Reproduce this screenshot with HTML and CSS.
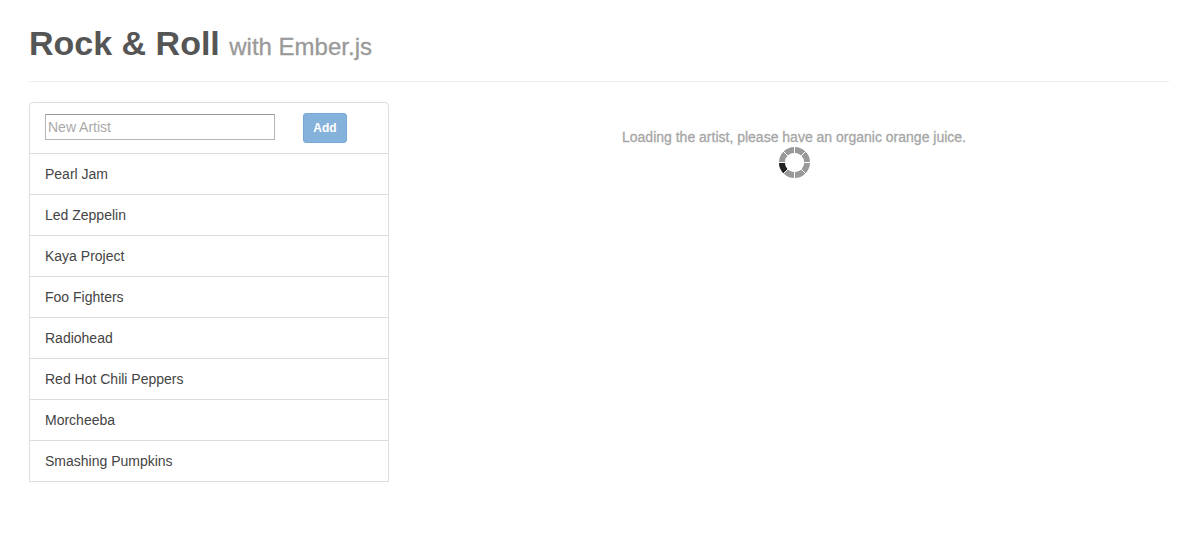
FILE: index.html
```html
<!DOCTYPE html>
<html lang="en">
<head>
<meta charset="utf-8">
<title>Rock &amp; Roll with Ember.js</title>
<link rel="stylesheet" href="styles.css">
</head>
<body>
<div class="container">
  <header class="page-header">
    <h1 class="title">Rock &amp; Roll <small class="subtitle">with Ember.js</small></h1>
  </header>
  <div class="row">
    <div class="artists">
      <form class="new-artist">
        <input class="artist-name" type="text" placeholder="New Artist" aria-label="New Artist">
        <button class="add" type="button">Add</button>
      </form>
      <a class="artist" href="#">Pearl Jam</a>
      <a class="artist" href="#">Led Zeppelin</a>
      <a class="artist" href="#">Kaya Project</a>
      <a class="artist" href="#">Foo Fighters</a>
      <a class="artist" href="#">Radiohead</a>
      <a class="artist" href="#">Red Hot Chili Peppers</a>
      <a class="artist" href="#">Morcheeba</a>
      <a class="artist" href="#">Smashing Pumpkins</a>
    </div>
    <main class="loading">
      <p class="message">Loading the artist, please have an organic orange juice.</p>
      <svg class="spinner" viewBox="0 0 31 31" width="31" height="31" aria-hidden="true">
        <circle cx="15.5" cy="15.5" r="12.5" fill="none" stroke="#999" stroke-width="6"/>
        <path d="M0 15.5A15.5 15.5 0 0 0 4.54 26.46L8.78 22.22A9.5 9.5 0 0 1 6 15.5Z" fill="#222"/>
        <path d="M15.5 0V31M0 15.5H31M4 4L27 27M27 4L4 27" fill="none" stroke="#fff"/>
        <circle cx="15.5" cy="15.5" r="9.5" fill="#fff"/>
      </svg>
    </main>
  </div>
</div>
</body>
</html>
```
FILE: styles.css
```css
* {
  box-sizing: border-box;
}

body {
  margin: 0;
  background: #fff;
  color: #333;
  font: 14px/20px "Helvetica Neue", Helvetica, "Liberation Sans", Arial, sans-serif;
}

.container {
  max-width: 1202px;
  padding: 0 33px 0 29px;
}

.page-header {
  padding: 24px 0 18px;
  margin-bottom: 20px;
  border-bottom: 1px solid #eee;
}

.title {
  margin: 0;
  color: #555;
  font-size: 34px;
  font-weight: bold;
  line-height: 39px;
}

.subtitle {
  color: #999;
  font-size: 24px;
  font-weight: normal;
  line-height: 1;
  -webkit-text-stroke: 0.3px #999;
}

.row {
  display: grid;
  grid-template-columns: minmax(0, 360fr) minmax(0, 750fr);
  gap: 30px;
  align-items: start;
}

.artists {
  border: 1px solid #ddd;
  border-radius: 4px 4px 0 0;
}

.new-artist {
  display: flex;
  align-items: flex-start;
  gap: 28px;
  padding: 10px 15px;
}

.artist-name {
  width: 230px;
  min-width: 0;
  height: 26px;
  margin-top: 1px;
  padding: 0 2px 1px;
  border: 1px solid #b4b4b4;
  border-top-color: #999;
  border-radius: 0;
  background: #fff;
  color: #555;
  font: inherit;
}

.artist-name::placeholder {
  color: #a9a9a9;
  opacity: 1;
}

.add {
  height: 30px;
  width: 44px;
  padding: 0;
  border: 1px solid #78aad6;
  border-radius: 3px;
  background: #85b2db;
  color: #fff;
  font: bold 12px/18px "Helvetica Neue", Helvetica, "Liberation Sans", Arial, sans-serif;
}

.artist {
  display: block;
  padding: 10px 15px;
  border-top: 1px solid #ddd;
  color: #444;
  text-decoration: none;
}

.loading {
  padding-top: 25px;
  text-align: center;
}

.message {
  margin: 0;
  color: #a6a6a6;
  -webkit-text-stroke: 0.3px #a6a6a6;
}

.spinner {
  display: block;
  margin: 0 auto;
}
```
